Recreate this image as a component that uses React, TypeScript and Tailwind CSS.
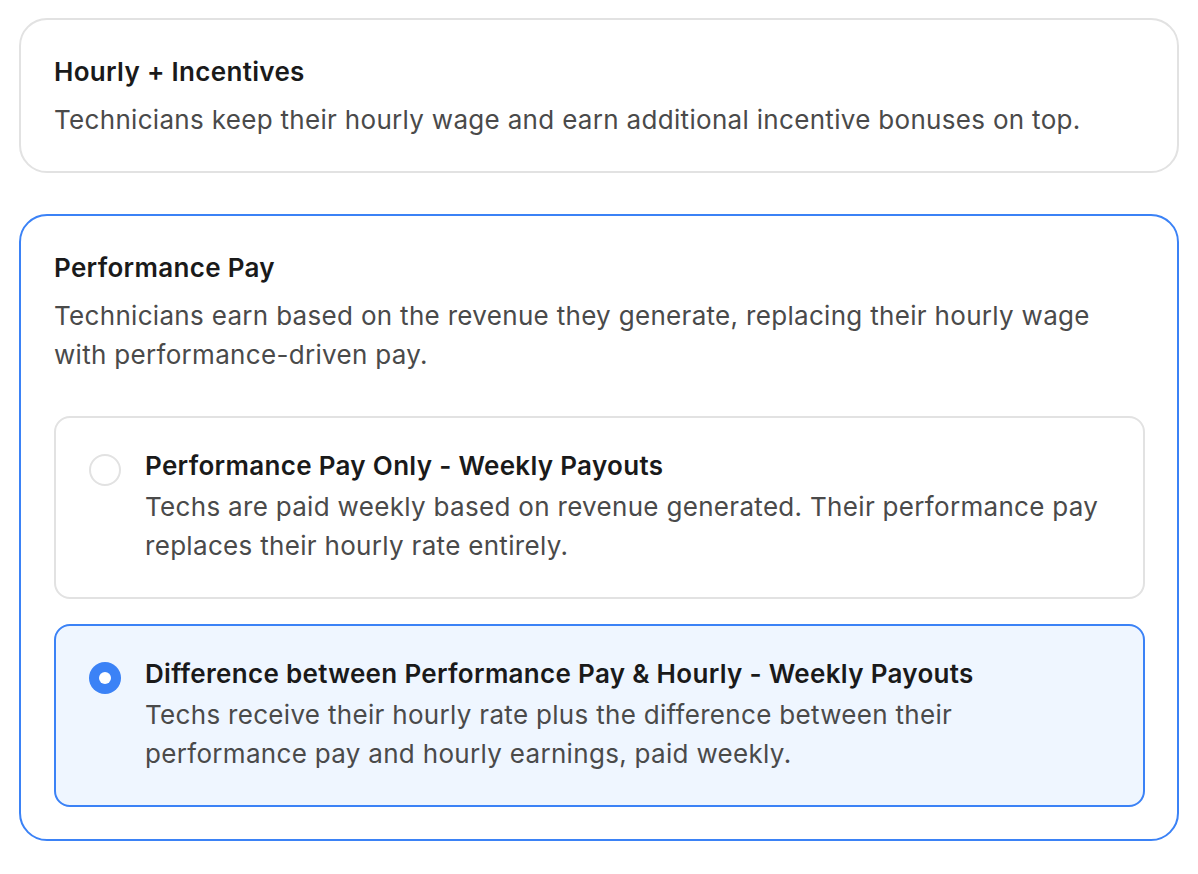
import React, { useState } from 'react';

type Option = {
  id: string;
  title: string;
  description: string;
};

const options: Option[] = [
  {
    id: 'perf-only',
    title: 'Performance Pay Only - Weekly Payouts',
    description:
      'Techs are paid weekly based on revenue generated. Their performance pay replaces their hourly rate entirely.',
  },
  {
    id: 'difference',
    title: 'Difference between Performance Pay & Hourly - Weekly Payouts',
    description:
      'Techs receive their hourly rate plus the difference between their performance pay and hourly earnings, paid weekly.',
  },
];

const Radio: React.FC<{ checked: boolean }> = ({ checked }) =>
  checked ? (
    <span className="mt-1 flex h-8 w-8 shrink-0 items-center justify-center rounded-full bg-[#3b82f6]">
      <span className="h-3 w-3 rounded-full bg-white" />
    </span>
  ) : (
    <span className="mt-1 h-8 w-8 shrink-0 rounded-full border-2 border-[#e2e2e2] bg-white" />
  );

const App: React.FC = () => {
  const [selected, setSelected] = useState('difference');

  return (
    <div
      className="min-h-screen bg-white px-[19px] pt-[18px] text-[26px] tracking-[0.012em] antialiased"
      style={{ fontFamily: 'Inter, "Noto Sans", sans-serif' }}
    >
      <div className="rounded-[28px] border-2 border-[#e2e2e2] py-8 pl-[33px] pr-8">
        <h3 className="text-[26px] font-semibold leading-[40px] text-[#1a1a1a]">Hourly + Incentives</h3>
        <p className="mt-2 leading-[39px] text-[#4a4a4a]">
          Technicians keep their hourly wage and earn additional incentive bonuses on top.
        </p>
      </div>

      <div className="mt-[41px] rounded-[28px] border-2 border-[#3b82f6] py-8 pl-[33px] pr-8">
        <h3 className="text-[26px] font-semibold leading-[40px] text-[#1a1a1a]">Performance Pay</h3>
        <p className="mt-2 leading-[39px] text-[#4a4a4a]">
          Technicians earn based on the revenue they generate, replacing their hourly wage with
          performance-driven pay.
        </p>

        <div className="mt-[42px] flex flex-col gap-[25px]">
          {options.map(opt => {
            const active = selected === opt.id;
            return (
              <button
                key={opt.id}
                onClick={() => setSelected(opt.id)}
                className={
                  active
                    ? 'flex items-start gap-6 rounded-2xl border-2 border-[#3b82f6] bg-[#eff6ff] py-8 pl-[33px] pr-8 text-left'
                    : 'flex items-start gap-6 rounded-2xl border-2 border-[#e2e2e2] bg-white py-8 pl-[33px] pr-8 text-left'
                }
              >
                <Radio checked={active} />
                <div>
                  <div className="font-semibold leading-8 text-[#1a1a1a]">{opt.title}</div>
                  <p className="mt-[5px] leading-[39px] text-[#4a4a4a]">{opt.description}</p>
                </div>
              </button>
            );
          })}
        </div>
      </div>
    </div>
  );
};

export default App;
